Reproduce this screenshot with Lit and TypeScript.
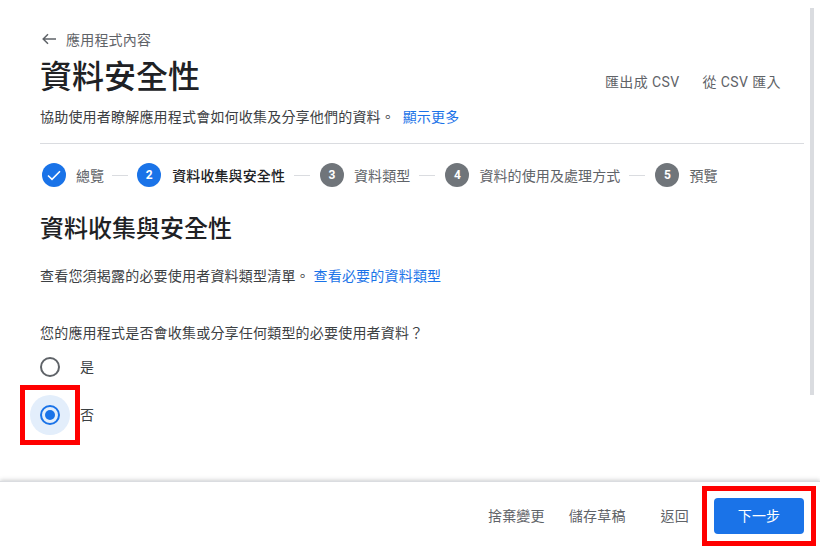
import { LitElement, html, css } from "lit";
import { customElement } from "lit/decorators.js";

@customElement("app-root")
export class AppRoot extends LitElement {
  static styles = css`
    :host { display: block; width: 820px; height: 550px; position: relative; overflow: hidden; background: #fff;
      font-family: Roboto, "Noto Sans CJK TC", sans-serif; color: #202124; }
    .page { width: 820px; height: 550px; display: flex; flex-direction: column; }
    .main { height: 481px; box-sizing: border-box; padding: 29px 16px 0 40px; display: flex; flex-direction: column; }
    .back { display: flex; align-items: center; gap: 9px; height: 20px; font-size: 14px; letter-spacing: .2px; color: #5f6368; }
    .back svg { display: block; margin-left: 1px; }
    .head { display: flex; justify-content: space-between; align-items: flex-end; margin-top: 7px; padding-right: 23px; }
    h1 { margin: 0; font-size: 32px; line-height: 42px; font-weight: 500; }
    .csv { display: flex; gap: 23px; font-size: 14px; letter-spacing: .4px; color: #5f6368; padding-bottom: 6px; line-height: 20px; }
    .desc { margin-top: 9px; font-size: 14px; letter-spacing: .2px; line-height: 20px; color: #3c4043; }
    a { color: #1a73e8; text-decoration: none; }
    .desc a { margin-left: 4px; }
    hr { border: 0; border-top: 1px solid #dadce0; margin: 16px 0 0; }
    .steps { display: flex; align-items: center; margin: 19px 0 0 2px; height: 24px; font-size: 14px; color: #5f6368; letter-spacing: .1px; }
    .num { width: 24px; height: 24px; border-radius: 50%; background: #70757a; color: #fff; font-size: 12px; font-weight: 700;
      display: flex; align-items: center; justify-content: center; margin-right: 10px; letter-spacing: 0; }
    .num.blue { background: #1a73e8; }
    .num.wide { margin-right: 11px; }
    .cur { color: #202124; font-weight: 500; }
    .line { width: 16px; height: 1px; background: #dadce0; margin: 0 10px 0 9px; }
    .line.first { margin: 0 9px 0 8px; }
    h2 { margin: 26px 0 0; font-size: 24px; line-height: 32px; font-weight: 500; }
    .p { font-size: 14px; line-height: 20px; color: #3c4043; letter-spacing: .2px; }
    .p1 { margin-top: 21px; }
    .p2 { margin-top: 37px; }
    .radios { display: flex; flex-direction: column; margin-top: 0; margin-left: -10px; }
    .radio { display: flex; align-items: center; height: 48px; font-size: 14px; color: #3c4043; }
    .lbl { padding-bottom: 2px; }
    .hit { width: 40px; height: 40px; border-radius: 50%; display: flex; align-items: center; justify-content: center; margin-right: 10px; }
    .hit.on { background: #e3eefb; }
    .ring { width: 20px; height: 20px; box-sizing: border-box; border: 2px solid #5f6368; border-radius: 50%; display: flex; align-items: center; justify-content: center; }
    .on .ring { border-color: #1a73e8; }
    .on .ring::after { content: ""; width: 10px; height: 10px; border-radius: 50%; background: #1a73e8; }
    .footer { height: 69px; box-sizing: border-box; border-top: 1px solid #dadce0; box-shadow: 0 -1px 4px rgba(60,64,67,.25);
      display: flex; align-items: center; justify-content: flex-end; padding: 0 16px 0 0; font-size: 14px; letter-spacing: .2px; color: #5f6368; position: relative; }
    .fb { margin-right: 24px; }
    .fb.b { margin-right: 25px; }
    .fb.c { margin-right: 35px; }
    .next { width: 90px; height: 36px; border-radius: 4px; background: #1a73e8; color: #fff; display: flex; align-items: center; justify-content: center; }
    .thumb { position: absolute; left: 810px; top: 8px; width: 4px; height: 387px; background: #dadce0; }
    .mark { position: absolute; box-sizing: border-box; border: 5px solid #f00; }
    .m1 { left: 20px; top: 385px; width: 60px; height: 60px; }
    .m2 { left: 702px; top: 486px; width: 114px; height: 60px; }
  `;
  render() {
    return html`
      <div class="page">
        <div class="main">
          <div class="back">
            <svg width="16" height="16" viewBox="0 0 16 16"><path d="M15 8H2.5M7 3.2 2.2 8 7 12.8" fill="none" stroke="#5f6368" stroke-width="1.5"/></svg>
            <span>應用程式內容</span>
          </div>
          <div class="head">
            <h1>資料安全性</h1>
            <div class="csv"><span>匯出成 CSV</span><span>從 CSV 匯入</span></div>
          </div>
          <div class="desc">協助使用者瞭解應用程式會如何收集及分享他們的資料。 <a>顯示更多</a></div>
          <hr />
          <div class="steps">
            <div class="num blue"><svg width="16" height="16" viewBox="0 0 16 16"><path d="M2 8.5 6 12.3 14 4.2" fill="none" stroke="#fff" stroke-width="1.6"/></svg></div>
            <span>總覽</span><div class="line first"></div>
            <div class="num blue wide">2</div><span class="cur">資料收集與安全性</span><div class="line"></div>
            <div class="num">3</div><span>資料類型</span><div class="line"></div>
            <div class="num">4</div><span>資料的使用及處理方式</span><div class="line"></div>
            <div class="num">5</div><span>預覽</span>
          </div>
          <h2>資料收集與安全性</h2>
          <div class="p p1">查看您須揭露的必要使用者資料類型清單。 <a>查看必要的資料類型</a></div>
          <div class="p p2">您的應用程式是否會收集或分享任何類型的必要使用者資料？</div>
          <div class="radios">
            <div class="radio"><div class="hit"><div class="ring"></div></div><span class="lbl">是</span></div>
            <div class="radio on"><div class="hit on"><div class="ring"></div></div><span class="lbl">否</span></div>
          </div>
        </div>
        <div class="footer">
          <span class="fb lbl">捨棄變更</span><span class="fb c lbl">儲存草稿</span><span class="fb b lbl">返回</span>
          <div class="next"><span class="lbl">下一步</span></div>
        </div>
      </div>
      <div class="thumb"></div>
      <div class="mark m1"></div>
      <div class="mark m2"></div>
    `;
  }
}
